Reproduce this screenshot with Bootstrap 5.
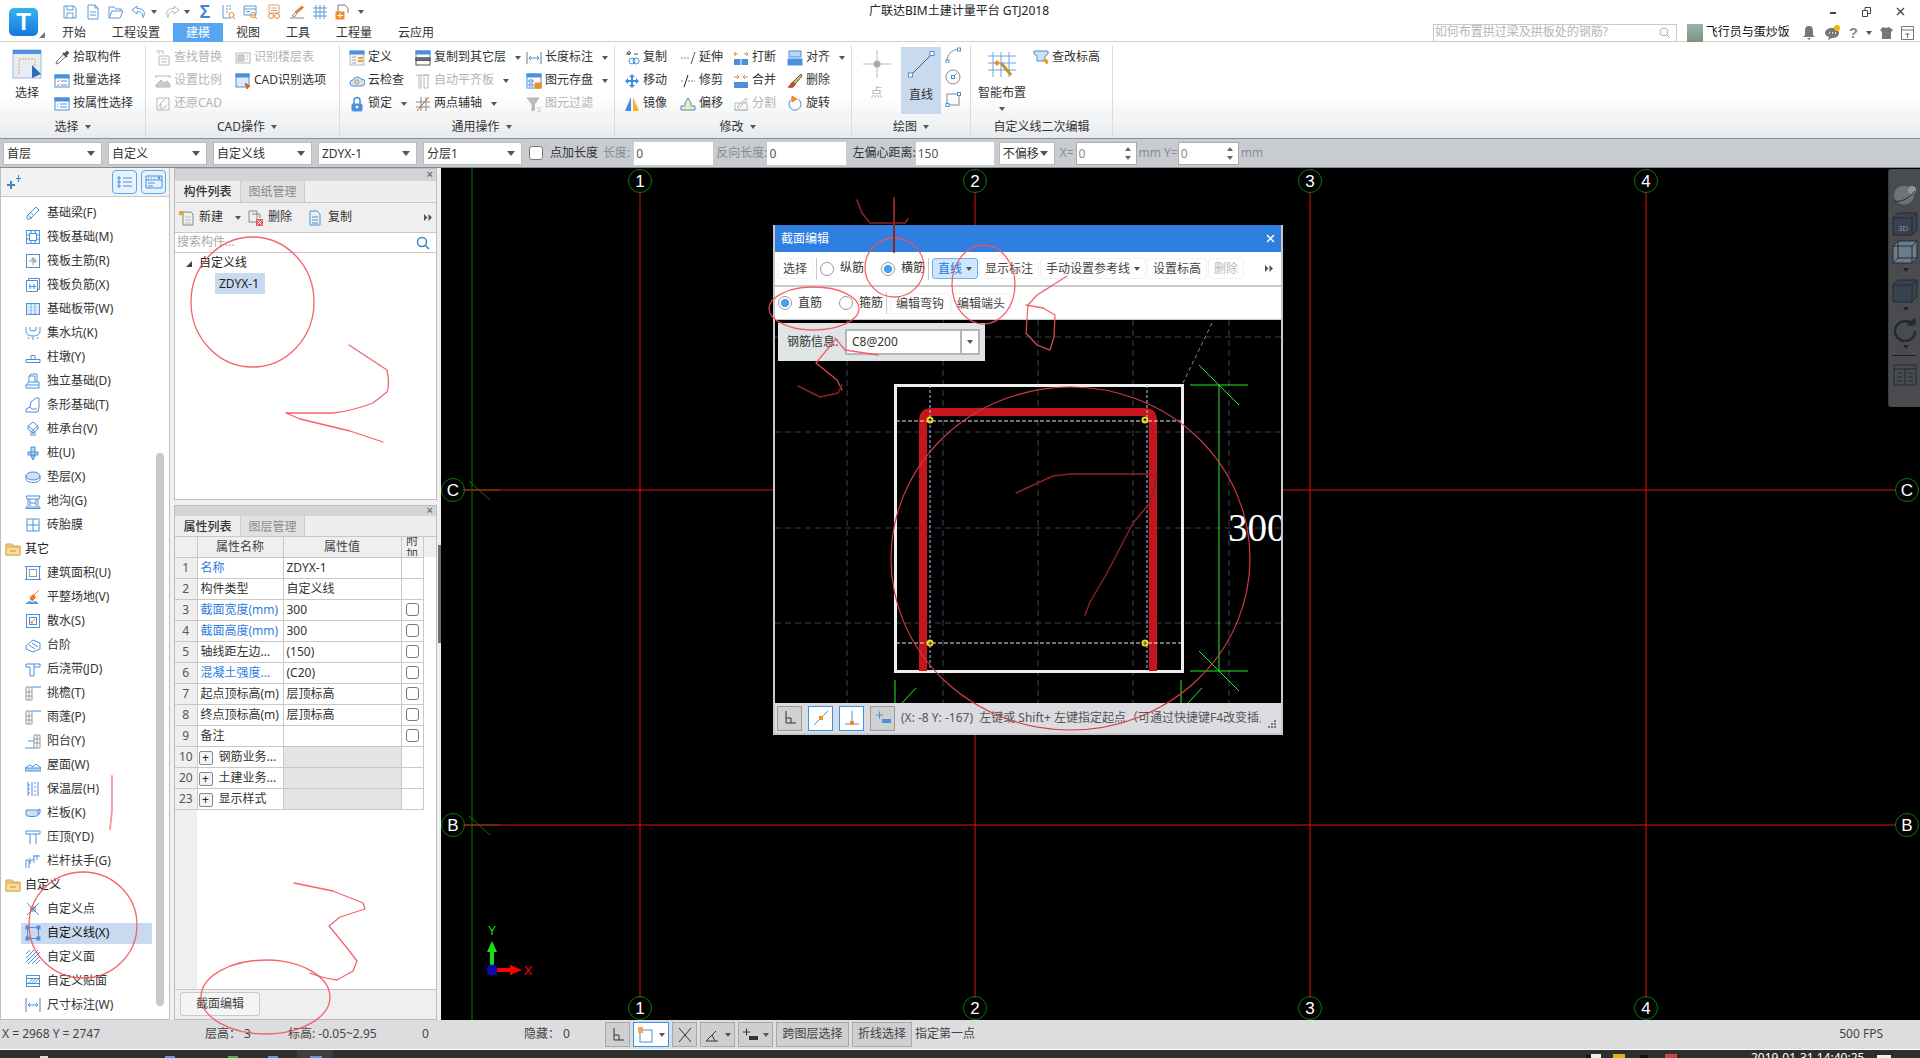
<!DOCTYPE html>
<html lang="zh-CN">
<head>
<meta charset="utf-8">
<title>广联达BIM土建计量平台 GTJ2018</title>
<link rel="stylesheet" href="https://cdn.jsdelivr.net/npm/bootstrap@5.3.0/dist/css/bootstrap.min.css">
<script src="https://cdn.jsdelivr.net/npm/bootstrap@5.3.0/dist/js/bootstrap.bundle.min.js"></script>
<style>
html,body{height:100%;margin:0}
body.gtj{width:1920px;height:1058px;overflow:hidden;position:relative;font:12px/1.2 "Noto Sans","Noto Sans CJK SC",sans-serif;color:#333;background:#f0f0f0}
svg{display:block;flex:none}
.ic{width:16px;height:16px;fill:none;stroke:#4a90dc;stroke-width:1}
.car{display:inline-block;width:0;height:0;border:3.5px solid transparent;border-top:4px solid #555;border-bottom:0;flex:none}
/* header */
.hdr{display:grid;grid-template-columns:49px 817px 186px 1fr;grid-template-rows:23px 19px;height:42px;background:#fff;border-bottom:1px solid #d2d2d2}
.logo{grid-row:1/3;position:relative;width:29px;height:28px;margin:8px 0 0 9px;border-radius:5px;background:linear-gradient(#34b2f2,#1877e0);color:#fff;font:700 24px/28px "Liberation Sans",sans-serif;text-align:center}
.logo-tip{position:absolute;left:30px;bottom:-2px;width:0;height:0;border:3px solid transparent;border-right-color:#777;border-bottom-color:#777}
.qat{gap:7px;padding-left:13px}
.qat .ic{stroke:#5b9bd5}
.qat-sum{width:16px;text-align:center;color:#3f84cc;font:700 18px/16px "Liberation Sans",sans-serif}
.ttl{text-align:center;white-space:nowrap;font-size:12px;color:#222;line-height:21px}
.winb{gap:25px;padding-right:15px}
.tabs{grid-column:2/5}
.tab{padding:0 13px;line-height:19px;color:#333}
.tab-on{background:#58a6f2;color:#fff}
.srch{width:244px;height:18px;border:1px solid #c8c8c8;color:#b5b5b5;padding:0 6px 0 1px;white-space:nowrap}
.ava{width:16px;height:18px;background:linear-gradient(#9eb5a6,#7d917f);margin:0 3px 0 10px}
.uname{color:#111;width:96px}
.rtool{gap:8px;padding-right:6px}
.qm{color:#888;font:700 15px/16px "Liberation Sans",sans-serif}
/* ribbon */
.rib{height:97px;background:linear-gradient(#fff 55%,#e8ebed);border-bottom:1px solid #8c8f92}
.rg{height:92px;margin-top:3px;border-right:1px solid #d9dbdd;flex:none}
.rg-body{height:70px;display:flex}
.rg-lab{height:22px;line-height:24px;text-align:center;color:#333;white-space:nowrap}
.rg-lab .car{margin-left:6px;vertical-align:2px}
.rcol{flex:none;display:flex;flex-direction:column;padding-top:1px}
.ri{height:23px;display:flex;align-items:center;gap:3px;white-space:nowrap}
.ri .car{margin-left:6px}
.off{color:#b4b4b4}
.off .ic{stroke:#b8b8b8}
.g1{width:146px}.g2{width:194px;padding-left:9px}.g3{width:275px;padding-left:9px}.g4{width:237px;padding-left:9px}.g5{width:119px}.g6{width:142px}
.w53{width:53px}.w80{width:80px}.w66{width:66px}.w111{width:111px}.w56{width:56px}.w54{width:54px}.w49{width:49px}.w62{width:62px}.w30{width:30px}
.bigb{display:flex;flex-direction:column;align-items:center;padding-top:4px;gap:7px;white-space:nowrap}
.big-sel{padding-left:0;width:54px}
.drawon{width:40px;height:67px;margin-top:2px;background:#c9d9ee;padding-top:3px;gap:8px}
.smc{padding:2px 0 0 4px;gap:6px}
/* toolbar */
.bar{height:29px;background:#c8cbd0;border-bottom:1px solid #8a8d90;padding-left:3px;white-space:nowrap}
.fs{width:99px;height:23px;margin-right:6px;padding:0 14px 0 3px;border:1px solid #bbb;border-radius:0;font-size:12px;line-height:21px;color:#333;background-position:right 6px center;background-size:8px 5px;background-image:url("data:image/svg+xml,%3csvg xmlns='http://www.w3.org/2000/svg' viewBox='0 0 8 5'%3e%3cpath fill='%23555' d='M0 0h8L4 5z'/%3e%3c/svg%3e")}
.fs-s{width:56px;margin:0 5px 0 5px}
.fi{height:23px;padding:0 2px;border:0;border-radius:0;font-size:12px;color:#555;background:#fff}
.w79{width:79px}.w78{width:78px}.cklab{color:#333;margin:0 5px 0 7px}
.ck{width:14px;height:14px;margin:0 0 0 1px!important;border:1px solid #777;border-radius:3px;background:#fff}
.gt{color:#8a8d90}
.ml3{margin-left:3px}.ml6{margin-left:6px}.ml2{margin-left:2px}
.spin{width:61px;height:23px;background:#fff;border:1px solid #aaa;padding-left:2px;color:#888;line-height:21px;position:relative}
.spin::before,.spin::after{content:"";position:absolute;right:5px;border:3px solid transparent}
.spin::before{top:4px;border-bottom:4px solid #666;border-top:0}
.spin::after{bottom:4px;border-top:4px solid #666;border-bottom:0}
/* main */
.mainz{height:852px}
.lp{width:170px;flex:none;background:#fff;border:1px solid #bdbfc2;border-top:0;position:relative;overflow:hidden;margin-right:4px}
.lp-top{height:29px;background:#f2f2f2;border-bottom:1px solid #c9c9c9;padding:0 3px 0 6px}
.vb{width:25px;height:24px;margin-left:4px;border:1px solid #58a9f0;border-radius:4px;background:#e8f2fc;display:flex;align-items:center;justify-content:center}
.lst{padding-top:4px}
.li{height:24px;display:flex;align-items:center;padding-left:24px;gap:6px;white-space:nowrap;color:#333}
.li-g{padding-left:4px;gap:4px;color:#222}
.li-on{background:linear-gradient(#c8d9f0,#c8d9f0) 20px 2px/131px 21px no-repeat;color:#111}
.sbar{position:absolute;left:155px;top:285px;width:8px;height:553px;background:#c9c9c9;border-radius:4px}
.mid{width:263px;flex:none;gap:5px}
.pn{background:#fff;border:1px solid #bbbdc0;overflow:hidden}
.pn1{height:332px}.pn2{height:515px}
.pn-t{height:12px;background:#d2d4d8;color:#777;font:700 11px/11px "Liberation Sans",sans-serif;text-align:right;padding-right:3px;flex:none}
.pn2 .pn-t{height:10px;line-height:9px}
.pn-tabs{height:22px;background:#eee;border-bottom:1px solid #c8c8c8;flex:none}
.pn2 .pn-tabs{height:21px}
.pt{width:65px;line-height:21px;text-align:center;color:#333;font-weight:500}
.pt-off{background:#e1e1e1;color:#8c8c8c;font-weight:400;border-left:1px solid #ccc;border-right:1px solid #ccc}
.pn-bar{height:30px;background:#efefef;border-bottom:1px solid #c8c8c8;position:relative;padding-left:4px;flex:none}
.pi{display:flex;align-items:center;gap:4px;white-space:nowrap}
.pi-a{margin-left:7px}
.pn-s{height:20px;border-bottom:1px solid #c8c8c8;color:#aaa;padding:0 5px 0 2px;flex:none}
.tree{padding:0 0 0 11px}
.tree-r{line-height:19px;height:20px;color:#222}
.tri{display:inline-block;width:0;height:0;border-style:solid;border-width:0 0 6px 6px;border-color:transparent transparent #444 transparent;margin-right:7px}
.tree-s{display:inline-block;margin:0 0 0 29px;padding:0 4px;line-height:21px;background:#c8d9f0;width:50px;white-space:nowrap;color:#222}
.ptb{flex:1 1 0;min-height:0;background:linear-gradient(90deg,#efefef 22px,#fff 22px);overflow:hidden}
.ptbl{table-layout:fixed;width:248px;margin:0;border-collapse:collapse;font-size:12px}
.ptbl td,.ptbl th{padding:0 3px;height:21px;line-height:19px;border:1px solid #c8c8c8;border-left-width:1px;white-space:nowrap;overflow:hidden;color:#333;font-weight:400;vertical-align:middle;background:transparent;box-shadow:none}
.ptbl thead th{background:#efefef;height:20px;text-align:center;border-width:0 1px 0 0;color:#444}
.ptbl .num{text-align:center;background:#efefef;padding:0;color:#555;border-left:0}
.c0{width:22px}.c1{width:86px}.c2{width:118px}.c3{width:22px}
.lnk{color:#2f7de0!important}
.grp{background:#e4e4e4!important}
.ckb{display:block;width:13px;height:13px;margin:0 auto;border:1px solid #777;border-radius:3px;background:#fff}
.plus{display:inline-block;width:14px;height:14px;border:1px solid #888;border-radius:2px;text-align:center;line-height:11px;margin:0 6px 0 -2px;background:#f4f4f4;color:#222;vertical-align:middle}
.ptbl thead .fj{padding:0}
.fjw{height:19px;overflow:hidden;line-height:14px}
.fjw span{display:block;margin-top:-3px}
.threst{height:20px;background:#efefef;position:relative}
.pn-b{height:30px;background:#efefef;border-top:1px solid #c8c8c8;padding:2px 0 0 5px;flex:none}
.xbtn{width:80px;height:24px;padding:0;font-size:12px;line-height:22px;color:#444;background:#f4f4f4;border:1px solid #c3c9d6;border-radius:3px}
.spl{width:4px;flex:none;position:relative;background:#efefef}
.spl-h{position:absolute;left:1px;top:377px;width:3px;height:98px;background:#6b6f75}
/* canvas */
.cvs{position:relative;flex:1 1 0;background:#000;overflow:hidden}
.cvs-s{position:absolute;left:0;top:0;width:1479px;height:852px}
.rside{position:absolute;right:0;top:1px;width:32px;height:238px;background:#4a4b4e;border-left:1px solid #3b3c3e;border-radius:3px 0 0 3px;padding:14px 0 0 3px}
.rs-ic{width:26px;height:24px;fill:#39424f;stroke:#232a33;stroke-width:1}
.rs-m5{margin-bottom:5px}.rs-m4{margin-bottom:4px}
.rs-car{margin-top:4px;margin-bottom:7px;border-top-color:#222}
.rs-car2{margin-top:3px;margin-bottom:0;border-top-color:#222}
.rs-hr{width:24px;margin:6px 0 7px;border-top:1px solid #222;opacity:1}
.dlg{position:absolute;left:332px;top:57px;width:510px;height:510px;background:#c8cacd;border:1px solid #c6c8cc;border-width:0 2px 2px;overflow:hidden}
.dlg-h{height:27px;margin:0 -2px;background:#2f7fe0;color:#fff;padding:0 8px;line-height:27px;font-size:12px}
.dlg-r1{height:33px;background:#fff;padding:0 0 0 2px;gap:1px;white-space:nowrap;margin-bottom:2px}
.dlg-r2{height:32px;background:#fff;padding:0 0 0 3px;gap:1px;white-space:nowrap;margin-bottom:1px}
.dbtn{height:21px;padding:0 5px;line-height:19px;font-size:12px;color:#444;background:#fff;border:1px solid #f2f2f2;border-radius:3px;white-space:nowrap;display:inline-flex;align-items:center;gap:4px}
.dbtn-on{background:#cfe6fc;border-color:#6cb2f2;color:#2277dd}
.dbtn-off{color:#b8b8b8}
.dsep{width:1px;height:22px;background:#c9c9c9;margin:0 2px}
.rd{width:14px;height:14px;margin:0!important;border:1px solid #999;background:#fff;flex:none}
.rd:checked{background:radial-gradient(circle,#4a9ff0 0 3.8px,#fff 4.4px);border-color:#999}
.rdl{color:#333;margin:0 16px 0 5px}
.dlg-cv{position:relative;height:383px;background:#000;overflow:hidden;margin:0 0 0 0}
.dlg-s{width:506px;height:383px}
.rinfo{position:absolute;left:3px;top:3px;width:207px;height:38px;background:#dfe5e6;padding:0 5px 0 9px;color:#333;gap:4px;white-space:nowrap}
.rsel{width:135px;height:26px;margin-left:auto;background:#fff;border:2px solid #b5b5b5;display:flex;align-items:center}
.rsel span:first-child{flex:1 1 0;padding-left:5px;border-right:2px solid #b5b5b5;line-height:22px}
.rsel .car{margin:0 5px}
.dlg-st{height:30px;background:#dcdce0;padding-left:2px;gap:6px;white-space:nowrap;position:relative;overflow:hidden;margin-top:0}
.sb{width:25px;height:25px;background:#d0d0d2;border:1px solid #9a9a9a;display:flex;align-items:center;justify-content:center;flex:none}
.sb-on{background:#fff;border-color:#2c96f0}
.dst-t{width:360px;overflow:hidden;color:#555;margin-left:0}
.grip{position:absolute;right:4px;bottom:5px}
/* status */
.stat{height:29px;background:#dddde0;white-space:nowrap;color:#444}
.s1{width:205px;padding-left:2px}.s2{width:83px}.s3{width:134px}.s4{width:102px}.s5{width:81px}
.mb{height:25px;background:#cfcfd1;border:1px solid #a9a9ab;display:flex;align-items:center;justify-content:center;gap:5px;margin-right:3px;flex:none;color:#444}
.mw25{width:25px}.mw36{width:36px;background:#fff;border-color:#2c96f0}.mw35{width:35px}.mw73{width:73px}.mw60{width:60px}
.fps{margin-left:auto;padding-right:37px}
.white1{height:1px;background:#fff}
.tbar{height:8px;background:#2b2f2e;overflow:hidden}
.tbar-s{width:1920px;height:8px}
.ann{position:absolute;left:0;top:0;width:1920px;height:1058px;pointer-events:none;fill:none;stroke-linejoin:round;stroke-linecap:round}
</style>
</head>
<body class="gtj d-flex flex-column">

<svg width="0" height="0" class="position-absolute">
<defs>
<symbol id="q-save" viewBox="0 0 16 16"><path d="M2 2h10l2 2v10H2z"/><path d="M5 2v4h6V2M5 14V9h6v5"/></symbol>
<symbol id="q-new" viewBox="0 0 16 16"><path d="M3 1h7l3 3v11H3z"/><path d="M10 1v3h3M5 8h6M5 11h6"/></symbol>
<symbol id="q-open" viewBox="0 0 16 16"><path d="M1 14V3h5l2 2h5v2"/><path d="M1 14l3-7h11l-3 7z"/></symbol>
<symbol id="q-undo" viewBox="0 0 16 16"><path d="M6 2L1 6l5 4V7.500c4 0 6 2 6 6 3-5 1-9-6-9z"/></symbol>
<symbol id="q-redo" viewBox="0 0 16 16"><path d="M10 2l5 4-5 4V7.500c-4 0-6 2-6 6-3-5-1-9 6-9z"/></symbol>
<symbol id="q-dot" viewBox="0 0 16 16"><path d="M3 1v13h8"/><path d="M6 2h2M9 2h2M6 5h2M9 5h2M6 8h2"/><circle cx="11.500" cy="11" r="2.500" stroke="#e08a30"/><path d="M13 13l2 2" stroke="#e08a30"/></symbol>
<symbol id="q-find" viewBox="0 0 16 16"><path d="M1 2h12v9H1zM1 5h12M3 7.500h4"/><circle cx="10" cy="11" r="2.500" stroke="#e08a30"/><path d="M12 13l2 2" stroke="#e08a30"/></symbol>
<symbol id="q-glass" viewBox="0 0 16 16"><path d="M3 1h10v8H3zM5 4h6M5 6.500h6" stroke="#d99a7a"/><circle cx="5" cy="12" r="2.500" stroke="#e08a30"/><circle cx="11" cy="12" r="2.500" stroke="#e08a30"/></symbol>
<symbol id="q-brush" viewBox="0 0 16 16"><path d="M13 2l1.500 1.500-7 6L6 8z" fill="#e08030" stroke="#e08030"/><path d="M6 9l-3 3 3 .500 1.500-2.500M1 14h14" stroke="#888"/></symbol>
<symbol id="q-grid" viewBox="0 0 16 16"><path d="M1 4h14M1 8h14M1 12h14M4 1v14M8 1v14M12 1v14"/></symbol>
<symbol id="q-doc" viewBox="0 0 16 16"><path d="M3 1h7l3 3v5M3 1v8" stroke="#777"/><rect x="1" y="8" width="8" height="7" fill="#f08c20" stroke="#f08c20"/><path d="M5 9v5M2 11.500h6" stroke="#fff"/></symbol>
<symbol id="r-pick" viewBox="0 0 16 16"><path d="M2 14l1-3 7-7 2 2-7 7z" stroke="#777"/><path d="M9 3l4 4M11 4l2-2 1 1-2 2" stroke="#555" stroke-width="2"/></symbol>
<symbol id="r-batch" viewBox="0 0 16 16"><rect x="1" y="2" width="14" height="12" fill="#fff"/><rect x="1" y="2" width="14" height="3" fill="#4a90dc"/><path d="M3 8l1 1 1.500-2M3 12l1 1 1.500-2" stroke="#f08c20"/><path d="M7 8h6M7 12h6"/></symbol>
<symbol id="r-attr" viewBox="0 0 16 16"><rect x="1" y="2" width="14" height="12" fill="#fff"/><rect x="1" y="2" width="14" height="3" fill="#4a90dc"/><path d="M3 8h1M3 11h1M6 8h7M6 11h7"/></symbol>
<symbol id="r-find" viewBox="0 0 16 16"><path d="M1 1h7v3M3 3h2"/><path d="M4 6h10v9H4zM6 9h6M6 12h6"/></symbol>
<symbol id="r-scale" viewBox="0 0 16 16"><path d="M1 2v3M15 2v3M1 3h14"/><path d="M1 14h14v-3l-3-3-3 2-3-3-5 5z" fill="#ccc"/></symbol>
<symbol id="r-rest" viewBox="0 0 16 16"><path d="M2 2h12v12H2z"/><path d="M10 3L5 8v4h4l3-3"/><path d="M5 8l2 2"/></symbol>
<symbol id="r-tbl" viewBox="0 0 16 16"><rect x="1" y="3" width="14" height="10"/><rect x="3" y="5" width="6" height="6" fill="#ccc"/><path d="M11 6h2M11 9h2"/></symbol>
<symbol id="r-cad" viewBox="0 0 16 16"><rect x="1" y="1" width="13" height="13" fill="#dcebf9"/><rect x="1" y="1" width="13" height="3" fill="#4a90dc"/><path d="M10 10l5 3-2 1-1 2z" fill="#e0602c" stroke="#e0602c"/></symbol>
<symbol id="r-def" viewBox="0 0 16 16"><rect x="1" y="1" width="14" height="14" fill="#f2f2f2" stroke="#bbb"/><rect x="1" y="1" width="14" height="3" fill="#4a90dc" stroke="#4a90dc"/><path d="M3 7h4M3 10h4M3 13h4" stroke="#aaa"/><path d="M9 8h5M9 11h5" stroke="#f0a030" stroke-width="2"/></symbol>
<symbol id="r-cloud" viewBox="0 0 16 16"><path d="M4 13a3 3 0 010-6 4.500 4.500 0 018-1 3.500 3.500 0 011 7z" fill="#cfe3f7"/><circle cx="8" cy="9" r="2" stroke="#e08a30"/></symbol>
<symbol id="r-lock" viewBox="0 0 16 16"><path d="M5 8V4.500a3 3 0 016 0V8" stroke-width="1.500"/><rect x="3" y="8" width="10" height="7" rx="1" fill="#4a90dc"/><circle cx="8" cy="11" r="1" fill="#fff" stroke="#fff"/></symbol>
<symbol id="r-copy" viewBox="0 0 16 16"><rect x="1" y="1" width="14" height="9" fill="#fff"/><rect x="1" y="1" width="14" height="3" fill="#4a90dc"/><rect x="1" y="8" width="14" height="7" fill="#fff" stroke="#555"/><rect x="1" y="8" width="14" height="2.500" fill="#777" stroke="#555"/></symbol>
<symbol id="r-ali" viewBox="0 0 16 16"><path d="M1 2h14M4 2v13h2V2M9 2h4v13H9z"/></symbol>
<symbol id="r-axis" viewBox="0 0 16 16"><path d="M1 6h14M1 11h14M6 1v14M11 1v14" stroke="#888"/><path d="M2 15L14 1" stroke="#e05030"/></symbol>
<symbol id="r-len" viewBox="0 0 16 16"><path d="M1 2v12M15 2v12" stroke="#777"/><path d="M3 8h10M5 6L3 8l2 2M11 6l2 2-2 2"/></symbol>
<symbol id="r-save" viewBox="0 0 16 16"><rect x="1" y="1" width="14" height="14" fill="#fff"/><rect x="1" y="1" width="14" height="3" fill="#4a90dc"/><path d="M3 7h4v2H3zM3 11h4v2H3z"/><rect x="9" y="10" width="6" height="5" fill="#f08c20" stroke="#f08c20"/></symbol>
<symbol id="r-fil" viewBox="0 0 16 16"><path d="M1 2h12L8.500 8v6L6 15V8z" fill="#bbb"/><path d="M11 12h4M11 15h4"/></symbol>
<symbol id="m-copy" viewBox="0 0 16 16"><path d="M2 4h4M10 4h4" stroke="#555"/><circle cx="5" cy="3" r="1.500" stroke="#555"/><circle cx="8" cy="11" r="3"/><circle cx="12" cy="11" r="3"/></symbol>
<symbol id="m-move" viewBox="0 0 16 16" ><path d="M8 1l3 3H9v3h3V5l3 3-3 3V9H9v3h2l-3 3-3-3h2V9H4v2L1 8l3-3v2h3V4H5z" fill="#3a8de0" stroke="none"/></symbol>
<symbol id="m-mir" viewBox="0 0 16 16"><path d="M7 1v14H1z" fill="#3a8de0" stroke="none"/><path d="M9 1v14h6z" fill="#f5b030" stroke="none"/></symbol>
<symbol id="m-ext" viewBox="0 0 16 16"><path d="M1 8h8" stroke-dasharray="2 1"/><path d="M15 2L11 14" stroke="#555"/></symbol>
<symbol id="m-trim" viewBox="0 0 16 16"><path d="M1 8h3M8 8h7" stroke-dasharray="2 1"/><path d="M8 2L4 14" stroke="#222"/></symbol>
<symbol id="m-off" viewBox="0 0 16 16"><path d="M1 14V10h4V7l3-5 3 5v3h4v4z" fill="#fbe7b0" stroke="#3a8de0"/></symbol>
<symbol id="m-brk" viewBox="0 0 16 16"><rect x="1" y="9" width="6.500" height="6" fill="#4a90dc" stroke="none"/><rect x="8.500" y="9" width="6.500" height="6" fill="#4a90dc" stroke="none"/><path d="M1 4h4M3 2l-2 2 2 2M11 4h4M13 2l2 2-2 2" stroke="#e08a30"/></symbol>
<symbol id="m-mrg" viewBox="0 0 16 16"><rect x="1" y="9" width="14" height="6" fill="#4a90dc" stroke="none"/><path d="M1 4h5M4 2l2 2-2 2M10 4h5M12 2l-2 2 2 2" stroke="#e08a30"/></symbol>
<symbol id="m-spl" viewBox="0 0 16 16"><path d="M1 14h14M2 7h12v7H2z"/><path d="M4 11L13 2l1.500 1.500L6 12z"/></symbol>
<symbol id="m-ali" viewBox="0 0 16 16"><rect x="2" y="1" width="12" height="6" fill="#bcd5f0"/><rect x="1" y="9" width="14" height="6" fill="#4a90dc"/></symbol>
<symbol id="m-del" viewBox="0 0 16 16"><path d="M14 1L6 9l2 2 7-8z" fill="#d9c060" stroke="#555"/><path d="M6 9c-3 1-2 4-5 5 4 1 7 0 7-3z" fill="#b85020" stroke="#b85020"/></symbol>
<symbol id="m-rot" viewBox="0 0 16 16"><path d="M11 3a6 6 0 11-6 0"/><path d="M5 0l5 3-5 3z" fill="#f08c20" stroke="#f08c20"/></symbol>
<symbol id="d-arc" viewBox="0 0 16 16"><path d="M2 14C2 8 6 3 14 2" stroke="#888"/><rect x="1" y="13" width="3" height="3" fill="#fff"/><rect x="12.500" y="1" width="3" height="3" fill="#fff"/></symbol>
<symbol id="d-cir" viewBox="0 0 16 16"><circle cx="8" cy="8" r="7" stroke="#888"/><path d="M8 8l4-4" stroke="#888"/><rect x="6.500" y="6.500" width="3" height="3" fill="#fff"/></symbol>
<symbol id="d-rect" viewBox="0 0 16 16"><rect x="2" y="3" width="12" height="11" stroke="#888"/><rect x="12.500" y="1.500" width="3" height="3" fill="#fff"/><rect x="1" y="12.500" width="3" height="3" fill="#fff"/></symbol>
<symbol id="e-cha" viewBox="0 0 16 16"><path d="M4 1v12h10" stroke="#333"/><path d="M4 8h5v5" stroke="#333"/></symbol>
<symbol id="e-lin" viewBox="0 0 16 16"><path d="M1 15L15 1" stroke="#4a90dc"/><rect x="6" y="6" width="4" height="4" fill="#f08c20" stroke="none"/></symbol>
<symbol id="e-per" viewBox="0 0 16 16"><path d="M8 1v13M1 14h14" stroke="#4a90dc"/><rect x="6" y="11" width="4" height="4" fill="#f08c20" stroke="none"/></symbol>
<symbol id="e-add" viewBox="0 0 16 16"><path d="M1 5h7M4.500 1.500v7" stroke="#4a90dc"/><rect x="7" y="9" width="9" height="4" fill="#4a90dc" stroke="none"/></symbol>
<symbol id="st-rect" viewBox="0 0 16 16"><rect x="2" y="3" width="12" height="12" stroke="#4a90dc"/><rect x="0" y="0" width="5" height="6" fill="#f0a860" stroke="none"/></symbol>
<symbol id="st-x" viewBox="0 0 16 16"><path d="M2 1l12 14M14 1L2 15" stroke="#333"/><path d="M1 1v14M15 1v14" stroke="#333" opacity="0"/></symbol>
<symbol id="st-ang" viewBox="0 0 16 16"><path d="M2 14h12M2 14L12 4" stroke="#333"/><path d="M8 8l3 6" stroke="#333"/></symbol>
<symbol id="st-add" viewBox="0 0 16 16"><path d="M1 5h7M4.500 1.500v7" stroke="#333"/><rect x="7" y="9" width="9" height="4" fill="#333" stroke="none"/></symbol>
<symbol id="s-beam" viewBox="0 0 16 16"><path d="M2 11L11 2l3 3-9 9H2zM3.500 10.500l3 3M6 8l2.500 2.500"/></symbol>
<symbol id="s-raft" viewBox="0 0 16 16"><rect x="1.500" y="1.500" width="13" height="13"/><rect x="4.500" y="4.500" width="7" height="7"/><path d="M1.500 6h3M1.500 10h3M11.500 6h3M11.500 10h3M6 1.500v3M10 1.500v3M6 11.500v3M10 11.500v3"/></symbol>
<symbol id="s-main" viewBox="0 0 16 16"><rect x="1.500" y="1.500" width="13" height="13"/><path d="M8 4v8M4 8h8M6 6h4v4" stroke="#999"/></symbol>
<symbol id="s-neg" viewBox="0 0 16 16"><path d="M1.500 3.500h11v11h-11zM3.500 3.500v-2h11v11h-2"/><path d="M5 7v5M9 7v5M4 9.500h7" /></symbol>
<symbol id="s-band" viewBox="0 0 16 16"><rect x="1.500" y="2.500" width="13" height="11" fill="#dcebf9"/><path d="M6 2.500v11M10 2.500v11" stroke-dasharray="2 1"/></symbol>
<symbol id="s-pit" viewBox="0 0 16 16"><path d="M1 2v4c0 3 3 5 7 5s7-2 7-5V2M5 2v3c0 1 6 1 6 0V2M3 12l1 2M8 12v3M13 12l-1 2" /></symbol>
<symbol id="s-pier" viewBox="0 0 16 16"><path d="M1 10.500h14v3H1zM6 10.500v-4h4v4"/></symbol>
<symbol id="s-iso" viewBox="0 0 16 16"><path d="M4 9V3l2-2h6v8M4 3h6v6M1 15v-3l3-3h10v3H1M1 15h13v-3"/></symbol>
<symbol id="s-str" viewBox="0 0 16 16"><path d="M1 15v-3l4-2 1-5 5-4h3v9l-1 5zM5 10l2 2h5"/></symbol>
<symbol id="s-cap" viewBox="0 0 16 16"><path d="M8 1l5 4-5 4-5-4zM3 5v3l5 4 5-4V5M6 10v5M10 10v5M8 9v6"/></symbol>
<symbol id="s-pile" viewBox="0 0 16 16"><path d="M6 2h4v9H6zM3 7h10v3H3zM6 11l2 4 2-4" fill="#bcd5f0"/></symbol>
<symbol id="s-cus" viewBox="0 0 16 16"><ellipse cx="8" cy="7" rx="7" ry="4" fill="#cfe0f3"/><path d="M1 7v3c0 2 3 3.500 7 3.500s7-1.500 7-3.500V7"/></symbol>
<symbol id="s-tre" viewBox="0 0 16 16"><path d="M1 3h14l-1 3H2zM3 6v7M5 6v7M11 6v7M13 6v7M1 14h14v1.500H1zM5 10h6"/></symbol>
<symbol id="s-mem" viewBox="0 0 16 16"><rect x="2" y="2" width="12" height="12"/><path d="M8 2v12M2 8h12"/></symbol>
<symbol id="s-area" viewBox="0 0 16 16"><rect x="1.500" y="1.500" width="13" height="13"/><rect x="4.500" y="4.500" width="7" height="7" stroke="#999"/><path d="M0 1.500h3M0 14.500h3M13 1.500h3M13 14.500h3"/></symbol>
<symbol id="s-lvl" viewBox="0 0 16 16"><path d="M0 15l4-3 3 1 4-1 3 3z" fill="#5b9bd5" stroke="none"/><path d="M5 11l3 1 3-4-3-3-3 3z" fill="#f07820" stroke="none"/><path d="M9 6l5-5" stroke="#f07820"/></symbol>
<symbol id="s-apr" viewBox="0 0 16 16"><rect x="1.500" y="1.500" width="13" height="13"/><rect x="4.500" y="4.500" width="7" height="7"/><path d="M6 10l4-4M8 10h-2V8" stroke="#e08a30"/></symbol>
<symbol id="s-stp" viewBox="0 0 16 16"><path d="M1 9l7-6 7 3v6l-7 3-7-3z"/><path d="M4 8l6 4M7 6l6 4"/></symbol>
<symbol id="s-pos" viewBox="0 0 16 16"><path d="M1 3h14v3H9v9H5V6H1zM9 3v3"/></symbol>
<symbol id="s-eav" viewBox="0 0 16 16"><path d="M1 2h6v13H1zM1 7h6M1 11h6M4 2v13" stroke="#999"/><path d="M7 2h9" /></symbol>
<symbol id="s-bal" viewBox="0 0 16 16"><path d="M9 2h6v13H9zM9 6h6M9 10h6M12 2v13" stroke="#999"/><path d="M0 15h9M3 8h6"/></symbol>
<symbol id="s-roo" viewBox="0 0 16 16"><path d="M0 11h16v3H0z" fill="#bcd5f0"/><path d="M0 11l5-3 3 2 3-3 5 4" /></symbol>
<symbol id="s-ins" viewBox="0 0 16 16"><path d="M3 1v14M13 1v14M7 1v14" /><path d="M3 4h4M3 8h4M3 12h4M10 1v14" stroke-dasharray="2 2"/></symbol>
<symbol id="s-par" viewBox="0 0 16 16"><path d="M1 5h12v5c0 2-12 2-12 0zM13 5l2-1v4l-2 2" fill="#cfe0f3"/></symbol>
<symbol id="s-top" viewBox="0 0 16 16"><path d="M1 2h14v3H1zM5 5v10M11 5v10"/></symbol>
<symbol id="s-rai" viewBox="0 0 16 16"><path d="M1 15V7h3v8M4 9l5-3M5 5v6M9 2v8M12 2v5M9 3h6"/></symbol>
<symbol id="s-fld" viewBox="0 0 16 16"><path d="M1 3h6l2 2h6v9H1z" fill="#f2cc7c" stroke="#d9a648"/><path d="M1 6h14v8H1z" fill="#f7dc9e" stroke="#d9a648"/><path d="M5 10h6" stroke="#c8963c"/></symbol>
<symbol id="s-pt" viewBox="0 0 16 16"><path d="M2 2l12 12M14 2L2 14" /><rect x="6" y="6" width="4" height="4" stroke="#777"/></symbol>
<symbol id="s-ln" viewBox="0 0 16 16"><rect x="2.500" y="2.500" width="11" height="11"/><rect x="1" y="1" width="3" height="3" fill="#4a90dc"/><rect x="12" y="1" width="3" height="3" fill="#4a90dc"/><rect x="1" y="12" width="3" height="3" fill="#4a90dc"/><rect x="12" y="12" width="3" height="3" fill="#4a90dc"/></symbol>
<symbol id="s-sf" viewBox="0 0 16 16"><path d="M1 5l4-4M1 9l8-8M1 13l12-12M3 15L15 3M7 15l8-8M11 15l4-4"/></symbol>
<symbol id="s-tex" viewBox="0 0 16 16"><rect x="1.500" y="2.500" width="13" height="11"/><path d="M1.500 5.500h13M1.500 10.500h13M3 10.500l5-5M6 10.500l5-5M9 10.500l5-5"/></symbol>
<symbol id="s-dim" viewBox="0 0 16 16"><path d="M1 1v14M15 1v14" stroke="#777"/><path d="M3 8h10M5 6L3 8l2 2M11 6l2 2-2 2"/></symbol>
<symbol id="t-new" viewBox="0 0 16 16"><path d="M4 2h8l2 2v11H4z" stroke="#888"/><path d="M6 7h6M6 10h6M6 13h6" stroke="#bbb"/><path d="M0 1h4v4H0z" fill="#f0a030" stroke="none"/></symbol>
<symbol id="t-del" viewBox="0 0 16 16"><path d="M1 1h8v11H1zM4 4h8v4" stroke="#888"/><rect x="8" y="9" width="7" height="7" fill="#e06060" stroke="none"/><path d="M9.500 10.500l4 4M13.500 10.500l-4 4" stroke="#fff"/></symbol>
<symbol id="t-cop" viewBox="0 0 16 16"><path d="M2 1h7l3 3v11H2z"/><path d="M4 7h6M4 10h6M4 13h6"/></symbol>
<symbol id="t-mag" viewBox="0 0 16 16"><circle cx="7" cy="7" r="4.500" stroke="#2f86c8" stroke-width="1.500"/><path d="M10.500 10.500L14 14" stroke="#2f86c8" stroke-width="1.500"/></symbol>
</defs>
</svg>

<header class="hdr">
  <div class="logo">T<span class="logo-tip"></span></div>
  <div class="qat d-flex align-items-center">
    <svg class="ic"><use href="#q-save"/></svg>
    <svg class="ic"><use href="#q-new"/></svg>
    <svg class="ic"><use href="#q-open"/></svg>
    <div class="d-flex align-items-center gap-1"><svg class="ic"><use href="#q-undo"/></svg><i class="car"></i></div>
    <div class="d-flex align-items-center gap-1 off"><svg class="ic"><use href="#q-redo"/></svg><i class="car"></i></div>
    <span class="qat-sum">Σ</span>
    <svg class="ic"><use href="#q-dot"/></svg>
    <svg class="ic"><use href="#q-find"/></svg>
    <svg class="ic"><use href="#q-glass"/></svg>
    <svg class="ic"><use href="#q-brush"/></svg>
    <svg class="ic"><use href="#q-grid"/></svg>
    <svg class="ic"><use href="#q-doc"/></svg>
    <i class="car"></i>
  </div>
  <div class="ttl">广联达BIM土建计量平台 GTJ2018</div>
  <div class="winb d-flex justify-content-end align-items-center">
    <svg width="8" height="8" fill="none" stroke="#444" stroke-width="2"><path d="M1 5h6"/></svg>
    <svg width="9" height="10" fill="none" stroke="#444"><path d="M.5 3.500h5v6h-5zM3 3V.5h5.500v6H6"/></svg>
    <svg width="9" height="9" fill="none" stroke="#444" stroke-width="1.300"><path d="M1 1l7 7M8 1L1 8"/></svg>
  </div>
  <div class="tabs d-flex align-items-stretch">
    <div class="tab">开始</div><div class="tab">工程设置</div><div class="tab tab-on">建模</div><div class="tab">视图</div><div class="tab">工具</div><div class="tab">工程量</div><div class="tab">云应用</div>
    <div class="ms-auto d-flex align-items-center">
      <div class="srch d-flex align-items-center justify-content-between"><span>如何布置拱过梁及拱板处的钢筋?</span><svg width="11" height="11" fill="none" stroke="#aaa"><circle cx="5" cy="5" r="3.800"/><path d="M8 8l3 3"/></svg></div>
      <span class="ava"></span>
      <span class="uname">飞行员与蛋炒饭</span>
      <div class="rtool d-flex align-items-center">
        <svg width="14" height="16" fill="#777"><path d="M7 1c3 0 4 2 4 5v4l2 2H1l2-2V6c0-3 1-5 4-5zM5 13h4l-2 2z"/></svg>
        <svg width="17" height="16"><path d="M8 3c4 0 7 2 7 5s-3 5-7 5l-4 2 1-3C3 11 1 10 1 8c0-3 3-5 7-5z" fill="#777"/><path d="M5 8h1M8 8h1M11 8h1" stroke="#fff" stroke-width="1.500"/><circle cx="13" cy="3" r="3" fill="#f5b800"/></svg>
        <span class="qm d-flex align-items-center">?</span>
        <i class="car"></i>
        <svg width="13" height="14" fill="#777"><path d="M3 1l3 1 3-1 4 3-2 2v7H2V6L0 4z"/></svg>
        <svg width="13" height="14" fill="none" stroke="#777"><path d="M.5.500h12v13H.5zM.5 4h12M6.500 12V7M4.500 9l2-2 2 2"/></svg>
      </div>
    </div>
  </div>
</header>

<section class="rib d-flex">
  <div class="rg g1">
    <div class="rg-body">
      <div class="bigb big-sel">
        <svg width="30" height="30"><rect x="1" y="1" width="28" height="28" fill="#e7edf6" stroke="#9fb8d6"/><rect x="1" y="1" width="28" height="4" fill="#4a90dc"/><path d="M7 25V10h16v8" fill="none" stroke="#f0a040" stroke-dasharray="2 1"/><path d="M20 16l9 9-9 4z" fill="#2c6cb8"/></svg>
        <span>选择</span>
      </div>
      <div class="rcol">
        <div class="ri"><svg class="ic"><use href="#r-pick"/></svg>拾取构件</div>
        <div class="ri"><svg class="ic"><use href="#r-batch"/></svg>批量选择</div>
        <div class="ri"><svg class="ic"><use href="#r-attr"/></svg>按属性选择</div>
      </div>
    </div>
    <div class="rg-lab">选择<i class="car"></i></div>
  </div>
  <div class="rg g2">
    <div class="rg-body">
      <div class="rcol w80 off">
        <div class="ri"><svg class="ic"><use href="#r-find"/></svg>查找替换</div>
        <div class="ri"><svg class="ic"><use href="#r-scale"/></svg>设置比例</div>
        <div class="ri"><svg class="ic"><use href="#r-rest"/></svg>还原CAD</div>
      </div>
      <div class="rcol">
        <div class="ri off"><svg class="ic"><use href="#r-tbl"/></svg>识别楼层表</div>
        <div class="ri"><svg class="ic"><use href="#r-cad"/></svg>CAD识别选项</div>
      </div>
    </div>
    <div class="rg-lab">CAD操作<i class="car"></i></div>
  </div>
  <div class="rg g3">
    <div class="rg-body">
      <div class="rcol w66">
        <div class="ri"><svg class="ic"><use href="#r-def"/></svg>定义</div>
        <div class="ri"><svg class="ic"><use href="#r-cloud"/></svg>云检查</div>
        <div class="ri"><svg class="ic"><use href="#r-lock"/></svg>锁定<i class="car"></i></div>
      </div>
      <div class="rcol w111">
        <div class="ri"><svg class="ic"><use href="#r-copy"/></svg>复制到其它层<i class="car"></i></div>
        <div class="ri off"><svg class="ic"><use href="#r-ali"/></svg>自动平齐板<i class="car"></i></div>
        <div class="ri"><svg class="ic"><use href="#r-axis"/></svg>两点辅轴<i class="car"></i></div>
      </div>
      <div class="rcol">
        <div class="ri"><svg class="ic"><use href="#r-len"/></svg>长度标注<i class="car"></i></div>
        <div class="ri"><svg class="ic"><use href="#r-save"/></svg>图元存盘<i class="car"></i></div>
        <div class="ri off"><svg class="ic"><use href="#r-fil"/></svg>图元过滤</div>
      </div>
    </div>
    <div class="rg-lab">通用操作<i class="car"></i></div>
  </div>
  <div class="rg g4">
    <div class="rg-body">
      <div class="rcol w56">
        <div class="ri"><svg class="ic"><use href="#m-copy"/></svg>复制</div>
        <div class="ri"><svg class="ic"><use href="#m-move"/></svg>移动</div>
        <div class="ri"><svg class="ic"><use href="#m-mir"/></svg>镜像</div>
      </div>
      <div class="rcol w53">
        <div class="ri"><svg class="ic"><use href="#m-ext"/></svg>延伸</div>
        <div class="ri"><svg class="ic"><use href="#m-trim"/></svg>修剪</div>
        <div class="ri"><svg class="ic"><use href="#m-off"/></svg>偏移</div>
      </div>
      <div class="rcol w54">
        <div class="ri"><svg class="ic"><use href="#m-brk"/></svg>打断</div>
        <div class="ri"><svg class="ic"><use href="#m-mrg"/></svg>合并</div>
        <div class="ri off"><svg class="ic"><use href="#m-spl"/></svg>分割</div>
      </div>
      <div class="rcol">
        <div class="ri"><svg class="ic"><use href="#m-ali"/></svg>对齐<i class="car"></i></div>
        <div class="ri"><svg class="ic"><use href="#m-del"/></svg>删除</div>
        <div class="ri"><svg class="ic"><use href="#m-rot"/></svg>旋转</div>
      </div>
    </div>
    <div class="rg-lab">修改<i class="car"></i></div>
  </div>
  <div class="rg g5">
    <div class="rg-body">
      <div class="bigb w49 off">
        <svg width="30" height="30" fill="none" stroke="#bbb"><path d="M15 1v28M1 15h28"/><circle cx="15" cy="15" r="3.500" fill="#aaa" stroke="none"/></svg>
        <span>点</span>
      </div>
      <div class="bigb drawon">
        <svg width="30" height="30" fill="none" stroke="#555"><path d="M5 25L26 4"/><rect x="2.500" y="23" width="4" height="4" fill="#fff" stroke="#4a90dc"/><rect x="24" y="1.500" width="4" height="4" fill="#fff" stroke="#4a90dc"/></svg>
        <span>直线</span>
      </div>
      <div class="rcol smc">
        <svg class="ic"><use href="#d-arc"/></svg>
        <svg class="ic"><use href="#d-cir"/></svg>
        <svg class="ic"><use href="#d-rect"/></svg>
      </div>
    </div>
    <div class="rg-lab">绘图<i class="car"></i></div>
  </div>
  <div class="rg g6">
    <div class="rg-body">
      <div class="bigb w62">
        <svg width="30" height="30" fill="none" stroke="#6aa4e0"><path d="M6 3v25M14 3v25M22 3v25M1 7h28M1 14h28M1 21h28"/><path d="M14 14l10 12" stroke="#c9902c" stroke-width="3"/><path d="M10 11l3 3-3 3-3-3z" fill="#f08c20" stroke="none"/></svg>
        <span>智能布置</span>
        <i class="car"></i>
      </div>
      <div class="rcol">
        <div class="ri"><svg class="ic"><path d="M1 1h14v3l-3 2v5H4V6L1 4z" fill="#cfe0f3"/><path d="M10 10l3-1 2 2-1 3z" fill="#f0a030" stroke="#f0a030"/></svg>查改标高</div>
      </div>
    </div>
    <div class="rg-lab">自定义线二次编辑</div>
  </div>
</section>

<section class="bar d-flex align-items-center">
  <select class="form-select fs"><option>首层</option></select>
  <select class="form-select fs"><option>自定义</option></select>
  <select class="form-select fs"><option>自定义线</option></select>
  <select class="form-select fs"><option>ZDYX-1</option></select>
  <select class="form-select fs"><option>分层1</option></select>
  <input class="form-check-input ck" type="checkbox">
  <span class="cklab">点加长度</span>
  <span class="gt">长度:</span><input class="form-control fi w79 ms-1" value="0">
  <span class="gt ml3">反向长度:</span><input class="form-control fi w79" value="0">
  <span class="ml6">左偏心距离:</span><input class="form-control fi w78" value="150">
  <select class="form-select fs fs-s"><option>不偏移</option></select>
  <span class="gt">X=</span><div class="spin ml2">0</div><span class="gt ml2">mm</span>
  <span class="gt ml3">Y=</span><div class="spin">0</div><span class="gt ml2">mm</span>
</section>

<main class="mainz d-flex">
  <aside class="lp">
    <div class="lp-top d-flex align-items-center">
      <svg width="14" height="14" fill="#3f84cc"><path d="M0 9h3V6h2v3h3v2H5v3H3v-3H0zM9 3h2V0h1v3h2v1h-2v3h-1V4H9z"/></svg>
      <div class="ms-auto vb"><svg width="16" height="14" fill="none" stroke="#4a90dc"><path d="M1 2h2v2H1zM1 6h2v2H1zM1 10h2v2H1zM6 3h9M6 7h9M6 11h9"/></svg></div>
      <div class="vb"><svg width="18" height="14" fill="none" stroke="#4a90dc"><path d="M1 1h16v12H1zM1 5h16M3 3h1M6 3h1M9 3h1M3 8h7M3 11h5"/><path d="M13 2l2 0-1 2z" fill="#4a90dc"/></svg></div>
    </div>
    <div class="lst">
      <div class="li"><svg class="ic"><use href="#s-beam"/></svg>基础梁(F)</div>
      <div class="li"><svg class="ic"><use href="#s-raft"/></svg>筏板基础(M)</div>
      <div class="li"><svg class="ic"><use href="#s-main"/></svg>筏板主筋(R)</div>
      <div class="li"><svg class="ic"><use href="#s-neg"/></svg>筏板负筋(X)</div>
      <div class="li"><svg class="ic"><use href="#s-band"/></svg>基础板带(W)</div>
      <div class="li"><svg class="ic"><use href="#s-pit"/></svg>集水坑(K)</div>
      <div class="li"><svg class="ic"><use href="#s-pier"/></svg>柱墩(Y)</div>
      <div class="li"><svg class="ic"><use href="#s-iso"/></svg>独立基础(D)</div>
      <div class="li"><svg class="ic"><use href="#s-str"/></svg>条形基础(T)</div>
      <div class="li"><svg class="ic"><use href="#s-cap"/></svg>桩承台(V)</div>
      <div class="li"><svg class="ic"><use href="#s-pile"/></svg>桩(U)</div>
      <div class="li"><svg class="ic"><use href="#s-cus"/></svg>垫层(X)</div>
      <div class="li"><svg class="ic"><use href="#s-tre"/></svg>地沟(G)</div>
      <div class="li"><svg class="ic"><use href="#s-mem"/></svg>砖胎膜</div>
      <div class="li li-g"><svg class="ic"><use href="#s-fld"/></svg>其它</div>
      <div class="li"><svg class="ic"><use href="#s-area"/></svg>建筑面积(U)</div>
      <div class="li"><svg class="ic"><use href="#s-lvl"/></svg>平整场地(V)</div>
      <div class="li"><svg class="ic"><use href="#s-apr"/></svg>散水(S)</div>
      <div class="li"><svg class="ic"><use href="#s-stp"/></svg>台阶</div>
      <div class="li"><svg class="ic"><use href="#s-pos"/></svg>后浇带(JD)</div>
      <div class="li"><svg class="ic"><use href="#s-eav"/></svg>挑檐(T)</div>
      <div class="li"><svg class="ic"><use href="#s-eav"/></svg>雨蓬(P)</div>
      <div class="li"><svg class="ic"><use href="#s-bal"/></svg>阳台(Y)</div>
      <div class="li"><svg class="ic"><use href="#s-roo"/></svg>屋面(W)</div>
      <div class="li"><svg class="ic"><use href="#s-ins"/></svg>保温层(H)</div>
      <div class="li"><svg class="ic"><use href="#s-par"/></svg>栏板(K)</div>
      <div class="li"><svg class="ic"><use href="#s-top"/></svg>压顶(YD)</div>
      <div class="li"><svg class="ic"><use href="#s-rai"/></svg>栏杆扶手(G)</div>
      <div class="li li-g"><svg class="ic"><use href="#s-fld"/></svg>自定义</div>
      <div class="li"><svg class="ic"><use href="#s-pt"/></svg>自定义点</div>
      <div class="li li-on"><svg class="ic"><use href="#s-ln"/></svg>自定义线(X)</div>
      <div class="li"><svg class="ic"><use href="#s-sf"/></svg>自定义面</div>
      <div class="li"><svg class="ic"><use href="#s-tex"/></svg>自定义贴面</div>
      <div class="li"><svg class="ic"><use href="#s-dim"/></svg>尺寸标注(W)</div>
    </div>
    <div class="sbar"></div>
  </aside>

  <div class="mid d-flex flex-column">
    <div class="pn pn1 d-flex flex-column">
      <div class="pn-t">×</div>
      <div class="pn-tabs d-flex"><div class="pt">构件列表</div><div class="pt pt-off">图纸管理</div></div>
      <div class="pn-bar d-flex align-items-center">
        <div class="pi"><svg class="ic"><use href="#t-new"/></svg>新建<i class="car ms-2"></i></div>
        <div class="pi pi-a"><svg class="ic"><use href="#t-del"/></svg>删除</div>
        <div class="pi ms-3"><svg class="ic"><use href="#t-cop"/></svg>复制</div>
        <svg class="ms-auto me-1" width="8" height="7" fill="#555"><path d="M0 0l3.500 3.500L0 7zM4.500 0L8 3.500 4.500 7z"/></svg>
      </div>
      <div class="pn-s d-flex align-items-center justify-content-between"><span>搜索构件...</span><svg class="ic"><use href="#t-mag"/></svg></div>
      <div class="tree">
        <div class="tree-r"><i class="tri"></i>自定义线</div>
        <div class="tree-s">ZDYX-1</div>
      </div>
    </div>
    <div class="pn pn2 d-flex flex-column">
      <div class="pn-t">×</div>
      <div class="pn-tabs d-flex"><div class="pt">属性列表</div><div class="pt pt-off">图层管理</div></div>
      <div class="ptb">
        <div class="threst">
        <table class="table ptbl">
          <colgroup><col class="c0"><col class="c1"><col class="c2"><col class="c3"></colgroup>
          <thead><tr><th class="num"></th><th>属性名称</th><th>属性值</th><th class="fj"><div class="fjw"><span>附<br>加</span></div></th></tr></thead>
          <tbody>
            <tr><td class="num">1</td><td class="lnk">名称</td><td>ZDYX-1</td><td></td></tr>
            <tr><td class="num">2</td><td>构件类型</td><td>自定义线</td><td></td></tr>
            <tr><td class="num">3</td><td class="lnk">截面宽度(mm)</td><td>300</td><td><span class="ckb"></span></td></tr>
            <tr><td class="num">4</td><td class="lnk">截面高度(mm)</td><td>300</td><td><span class="ckb"></span></td></tr>
            <tr><td class="num">5</td><td>轴线距左边...</td><td>(150)</td><td><span class="ckb"></span></td></tr>
            <tr><td class="num">6</td><td class="lnk">混凝土强度...</td><td>(C20)</td><td><span class="ckb"></span></td></tr>
            <tr><td class="num">7</td><td>起点顶标高(m)</td><td>层顶标高</td><td><span class="ckb"></span></td></tr>
            <tr><td class="num">8</td><td>终点顶标高(m)</td><td>层顶标高</td><td><span class="ckb"></span></td></tr>
            <tr><td class="num">9</td><td>备注</td><td></td><td><span class="ckb"></span></td></tr>
            <tr><td class="num">10</td><td><span class="plus">+</span>钢筋业务...</td><td class="grp"></td><td></td></tr>
            <tr><td class="num">20</td><td><span class="plus">+</span>土建业务...</td><td class="grp"></td><td></td></tr>
            <tr><td class="num">23</td><td><span class="plus">+</span>显示样式</td><td class="grp"></td><td></td></tr>
          </tbody>
        </table>
        </div>
      </div>
      <div class="pn-b"><button class="btn xbtn" type="button">截面编辑</button></div>
    </div>
  </div>
  <div class="spl"><div class="spl-h"></div></div>

  <div class="cvs">
    <svg class="cvs-s" viewBox="441 168 1479 852" fill="none">
      <path d="M472 168V1020" stroke="#0a7a0a"/>
      <path d="M463 490H500M463 825H500" stroke="#0a7a0a"/>
      <path d="M469 481L490 500M469 816L490 835" stroke="#0a7a0a"/>
      <path d="M640 192V998M975 192V998M1310 192V998M1646 192V998M464 490H1896M464 825H1896" stroke="#e01010"/>
      <g stroke="#0a7a0a">
        <circle cx="640" cy="181" r="11.500"/><circle cx="975" cy="181" r="11.500"/><circle cx="1310" cy="181" r="11.500"/><circle cx="1646" cy="181" r="11.500"/>
        <circle cx="640" cy="1008" r="11.500"/><circle cx="975" cy="1008" r="11.500"/><circle cx="1310" cy="1008" r="11.500"/><circle cx="1646" cy="1008" r="11.500"/>
        <circle cx="453" cy="490" r="11.500"/><circle cx="453" cy="825" r="11.500"/><circle cx="1907" cy="490" r="11.500"/><circle cx="1907" cy="825" r="11.500"/>
      </g>
      <g fill="#fff" font-family="Liberation Sans, sans-serif" font-size="17" text-anchor="middle">
        <text x="640" y="187">1</text><text x="975" y="187">2</text><text x="1310" y="187">3</text><text x="1646" y="187">4</text>
        <text x="640" y="1014">1</text><text x="975" y="1014">2</text><text x="1310" y="1014">3</text><text x="1646" y="1014">4</text>
        <text x="453" y="496">C</text><text x="453" y="831">B</text><text x="1907" y="496">C</text><text x="1907" y="831">B</text>
      </g>
      <path d="M492 968V951" stroke="#14e014" stroke-width="4"/><path d="M492 941l5 11h-10z" fill="#14e014"/>
      <path d="M492 970H511" stroke="#f00" stroke-width="4"/><path d="M522 970l-12 5v-10z" fill="#f00"/>
      <circle cx="492" cy="970" r="5.500" fill="#0b0bb0"/>
      <text x="492" y="935" fill="#14e014" font-family="Liberation Sans, sans-serif" font-size="12" text-anchor="middle">Y</text>
      <text x="528" y="975" fill="#f00" font-family="Liberation Sans, sans-serif" font-size="13" text-anchor="middle">X</text>
    </svg>

    <div class="rside d-flex flex-column align-items-start">
      <svg class="rs-ic rs-m5" viewBox="0 0 26 24"><ellipse cx="12" cy="12" rx="10" ry="9.500" fill="#6e7279" stroke="none"/><ellipse cx="20" cy="7" rx="4" ry="4" fill="#90949a" stroke="none"/><path d="M2 18c8 2 16-4 21-10" fill="none" stroke="#2a2b2d"/></svg>
      <svg class="rs-ic rs-m4" viewBox="0 0 26 24"><path d="M1 6l5-5h19v17l-5 5H1z"/><path d="M1 6h19v17M20 6l5-5" fill="none"/><text x="6" y="19" font-size="8" fill="#8a929c" stroke="none" font-family="Liberation Sans, sans-serif">3D</text></svg>
      <svg class="rs-ic" viewBox="0 0 26 24"><path d="M1 6l5-5h19v17l-5 5H1z" fill="#6d7c8a"/><path d="M1 6h19v17M20 6l5-5M6 1v17h19M1 23l5-5" fill="none"/></svg>
      <i class="car align-self-center rs-car"></i>
      <svg class="rs-ic" viewBox="0 0 26 24"><path d="M1 6l5-5h19v17l-5 5H1z"/><path d="M1 6h19v17M20 6l5-5" fill="none"/></svg>
      <i class="car align-self-center rs-car"></i>
      <svg class="rs-ic" viewBox="0 0 26 24"><path d="M20 6A10 10 0 1023 13" fill="none" stroke-width="2.500"/><path d="M15 7h8V0z" fill="#232a33"/></svg>
      <i class="car align-self-center rs-car2"></i>
      <hr class="rs-hr">
      <svg class="rs-ic" viewBox="0 0 26 24"><path d="M2 2h22v20H2zM2 6h22M13 6v16M5 10h5M5 14h5M5 18h5M16 10h5M16 14h5M16 18h5" fill="none"/></svg>
    </div>

    <div class="dlg d-flex flex-column">
      <div class="dlg-h d-flex justify-content-between align-items-center"><span>截面编辑</span><svg width="9" height="9" fill="none" stroke="#fff" stroke-width="1.500"><path d="M1 1l7 7M8 1L1 8"/></svg></div>
      <div class="dlg-r1 d-flex align-items-center">
        <span class="dbtn">选择</span><span class="dsep"></span>
        <input class="form-check-input rd ms-1" type="radio" name="rd1"><span class="rdl">纵筋</span>
        <input class="form-check-input rd ms-1" type="radio" name="rd1" checked><span class="rdl me-0">横筋</span><span class="dsep"></span>
        <span class="dbtn dbtn-on">直线<i class="car"></i></span>
        <span class="dbtn">显示标注</span>
        <span class="dbtn">手动设置参考线<i class="car"></i></span>
        <span class="dbtn">设置标高</span>
        <span class="dbtn dbtn-off">删除</span>
        <svg class="ms-auto me-2" width="8" height="7" fill="#555"><path d="M0 0l3.500 3.500L0 7zM4.500 0L8 3.500 4.500 7z"/></svg>
      </div>
      <div class="dlg-r2 d-flex align-items-center">
        <input class="form-check-input rd ms-1" type="radio" name="rd2" checked><span class="rdl">直筋</span>
        <input class="form-check-input rd ms-1" type="radio" name="rd2"><span class="rdl me-0">箍筋</span><span class="dsep"></span>
        <span class="dbtn">编辑弯钩</span>
        <span class="dbtn">编辑端头</span>
      </div>
      <div class="dlg-cv">
        <svg class="dlg-s" viewBox="775 320 506 383" fill="none">
          <path d="M847 320V703M943 320V703M1038 320V703M1133 320V703M1229 320V703M775 337H1281M775 432H1281M775 528H1281M775 623H1281" stroke="#3a4152" stroke-dasharray="6 4"/>
          <path d="M1212 323L1183 383" stroke="#888" stroke-dasharray="4 3"/>
          <rect x="895.500" y="385.500" width="287" height="286" stroke="#eee" stroke-width="3"/>
          <path d="M923 671V421q0-9 9-9H1144q9 0 9 9V671" stroke="#c5161d" stroke-width="8"/>
          <path d="M930 385V671M1147 385V671" stroke="#a8cdf0" stroke-dasharray="3 2"/>
          <path d="M896 421H1181M896 643H1181" stroke="#dfe8f5" stroke-dasharray="4 2"/>
          <g stroke="#f2d91a" stroke-width="2"><circle cx="930" cy="420" r="2.500"/><circle cx="1145" cy="420" r="2.500"/><circle cx="930" cy="643" r="2.500"/><circle cx="1145" cy="643" r="2.500"/></g>
          <path d="M1219 385V671M1190 385H1248M1190 671H1248M1199 365L1239 405M1199 651L1239 691M895 680V703M1181 680V703M902 703L916 688M1188 703L1202 688" stroke="#24ee24"/>
          <text x="1228" y="541" fill="#fff" font-family="Liberation Serif, serif" font-size="39">300</text>
        </svg>
        <div class="rinfo d-flex align-items-center"><span>钢筋信息:</span><div class="rsel"><span>C8@200</span><i class="car"></i></div></div>
      </div>
      <div class="dlg-st d-flex align-items-center">
        <span class="sb"><svg class="ic"><use href="#e-cha"/></svg></span>
        <span class="sb sb-on"><svg class="ic"><use href="#e-lin"/></svg></span>
        <span class="sb sb-on"><svg class="ic"><use href="#e-per"/></svg></span>
        <span class="sb"><svg class="ic"><use href="#e-add"/></svg></span>
        <span class="dst-t">(X: -8 Y: -167)&nbsp; 左键或 Shift+ 左键指定起点（可通过快捷键F4改变插入点）</span>
        <svg class="grip" width="9" height="8" fill="#777"><path d="M6 0h2v2H6zM3 3h2v2H3zM6 3h2v2H6zM0 6h2v2H0zM3 6h2v2H3zM6 6h2v2H6z"/></svg>
      </div>
    </div>
  </div>
</main>

<footer class="stat d-flex align-items-center">
  <span class="s1">X = 2968 Y = 2747</span>
  <span class="s2">层高：&nbsp;3</span>
  <span class="s3">标高: -0.05~2.95</span>
  <span class="s4">0</span>
  <span class="s5">隐藏：&nbsp;0</span>
  <span class="mb mw25"><svg class="ic"><use href="#e-cha"/></svg></span>
  <span class="mb mw36"><svg class="ic"><use href="#st-rect"/></svg><i class="car"></i></span>
  <span class="mb mw25"><svg class="ic"><use href="#st-x"/></svg></span>
  <span class="mb mw35"><svg class="ic"><use href="#st-ang"/></svg><i class="car"></i></span>
  <span class="mb mw35"><svg class="ic"><use href="#st-add"/></svg><i class="car"></i></span>
  <span class="mb mw73">跨图层选择</span>
  <span class="mb mw60">折线选择</span>
  <span>指定第一点</span>
  <span class="fps">500 FPS</span>
</footer>
<div class="white1"></div>
<div class="tbar">
  <svg class="tbar-s" viewBox="0 1050 1920 8">
    <rect x="297" y="1050" width="36" height="8" fill="#3c4040"/>
    <g fill="#5b9bd5"><rect x="165" y="1056" width="10" height="2"/><rect x="228" y="1056" width="10" height="2" fill="#4caf50"/><rect x="268" y="1056" width="10" height="2"/><rect x="310" y="1056" width="12" height="2"/></g>
    <rect x="40" y="1056" width="8" height="2" fill="#ddd"/>
    <rect x="1586" y="1055" width="8" height="3" fill="#111"/><rect x="1591" y="1054" width="10" height="4" fill="#eee"/><rect x="1613" y="1054" width="12" height="4" fill="#e0b020"/><rect x="1640" y="1055" width="8" height="3" fill="#111"/><rect x="1665" y="1054" width="12" height="4" fill="#c84848"/><rect x="1877" y="1055" width="14" height="3" fill="#eee"/>
    <text x="1751" y="1062" fill="#fff" font-family="Noto Sans, sans-serif" font-size="12">2019-01-31  14:40:25</text>
  </svg>
</div>

<svg class="ann" viewBox="0 0 1920 1058">
  <g stroke="#f4525a" stroke-width="1.300" opacity=".9">
    <ellipse cx="252.500" cy="302" rx="61.500" ry="65"/>
    <path d="M349 345L387 370Q390 385 387 392L373 403Q352 411 333 413H286L300 419L350 431L383 442"/>
    <path d="M112 776V811L110 829" stroke-width="1.800" opacity=".7"/>
    <ellipse cx="83" cy="925" rx="54" ry="53"/>
    <path d="M294 883L333 891L363 903L365 909L340 917L329 926Q345 945 357 961L353 971L337 980Q322 978 310 973"/>
    <ellipse cx="265.500" cy="997" rx="64.500" ry="37"/>
    <ellipse cx="894.500" cy="267.500" rx="29.500" ry="29.500"/>
    <ellipse cx="814" cy="308.500" rx="45" ry="21.500"/>
    <ellipse cx="983.500" cy="284.500" rx="31.500" ry="39.500"/>
    <path d="M835 338L845 350L878 355"/>
    <path d="M1067 276L1053 285L1037 295L1028 305L1026 333L1037 345L1050 350L1054 337L1055 315L1043 308L1026 305"/>
    <path d="M835 340L816 363L837 380L842 390"/>
  </g>
  <path d="M894 198V252" stroke="#8e2222" stroke-width="2"/>
  <path d="M857 200L862 213L870 223H905L908 219" stroke="#8e2222" stroke-width="1.600"/>
  <path d="M842 385L838 393L820 397L798 386" stroke="#8e2222" stroke-width="1.500"/>
  <ellipse cx="1070.500" cy="558.500" rx="179.500" ry="171.500" stroke="#d03a40" stroke-width="1.200"/>
  <path d="M1016 493L1053 476L1070 474H1147L1157 477L1150 503L1133 523L1107 573L1090 602L1085 615" stroke="#8e2222" stroke-width="1.400"/>
</svg>
</body>
</html>
